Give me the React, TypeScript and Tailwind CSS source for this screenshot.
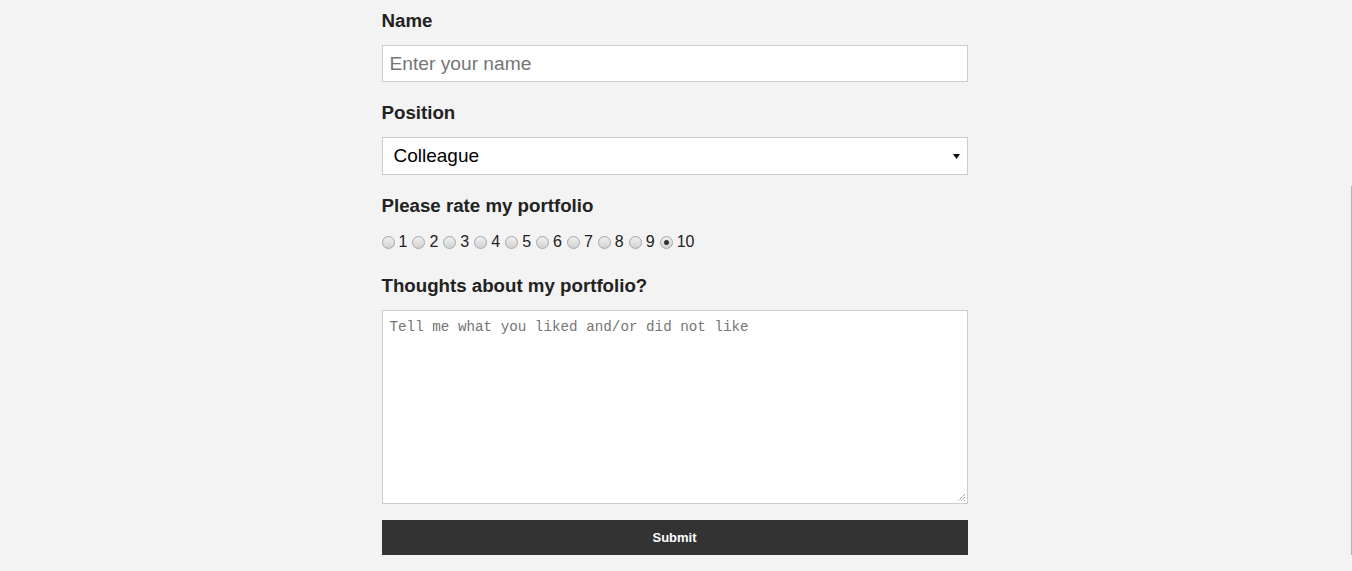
import React from "react";

const Radio = ({ checked }: { checked?: boolean }) => (
  <span className="inline-flex h-[13px] w-[13px] items-center justify-center rounded-full border border-[#a6a6a6] bg-gradient-to-b from-[#f0f0f0] to-[#d2d2d2]">
    {checked && <span className="h-[5px] w-[5px] rounded-full bg-[#333]" />}
  </span>
);

export default function App() {
  const nums = [1, 2, 3, 4, 5, 6, 7, 8, 9, 10];
  return (
    <div className="flex min-h-[571px] w-full bg-[#f3f3f3] font-['Liberation_Sans',Arial,sans-serif] text-[#222]">
      <div className="flex flex-1 justify-center">
        <form className="ml-[-2px] flex w-[586px] flex-col pt-[9px]">
          <label className="text-[18.7px] font-bold leading-[24px]">Name</label>
          <input
            className="mt-[12px] h-[37px] w-full border border-[#ccc] bg-white px-[7px] text-[19.2px] text-[#222] placeholder:text-[#757575] outline-none"
            placeholder="Enter your name"
          />
          <label className="mt-[19px] text-[18.7px] font-bold leading-[24px]">Position</label>
          <div className="mt-[12px] flex h-[38px] w-full items-center justify-between border border-[#ccc] bg-white pl-[11px] pr-[7px] text-[19px] text-black">
            <span>Colleague</span>
            <svg width="7" height="5" viewBox="0 0 7 5"><path d="M0 0h7L3.5 5z" fill="#111" /></svg>
          </div>
          <label className="mt-[19px] text-[18.7px] font-bold leading-[24px]">Please rate my portfolio</label>
          <div className="mt-[15px] flex h-[18px] items-center text-[16px] leading-[18px] text-[#222]">
            {nums.map((n) => (
              <span key={n} className="mr-[5px] flex items-center gap-[4px]">
                <Radio checked={n === 10} />
                <span>{n}</span>
              </span>
            ))}
          </div>
          <label className="mt-[23px] text-[18.7px] font-bold leading-[24px]">Thoughts about my portfolio?</label>
          <div className="relative mt-[12px] h-[194px] w-full border border-[#ccc] bg-white px-[7px] pt-[3px]">
            <span className="font-['Liberation_Mono',monospace] text-[14.25px] leading-[18px] text-[#757575]">
              Tell me what you liked and/or did not like
            </span>
            <svg className="absolute bottom-[1px] right-[1px]" width="9" height="9" viewBox="0 0 9 9">
              <path d="M8 1L1 8M8 4L4 8M8 7L7 8" stroke="#666" strokeWidth="1" strokeDasharray="1 1" />
            </svg>
          </div>
          <button
            type="button"
            className="mt-[16px] flex h-[35px] w-full items-center justify-center bg-[#333] text-[13px] font-bold text-white"
          >
            Submit
          </button>
        </form>
      </div>
      <div className="mt-[186px] h-[369px] w-px bg-[#b5b5b5]" />
    </div>
  );
}
